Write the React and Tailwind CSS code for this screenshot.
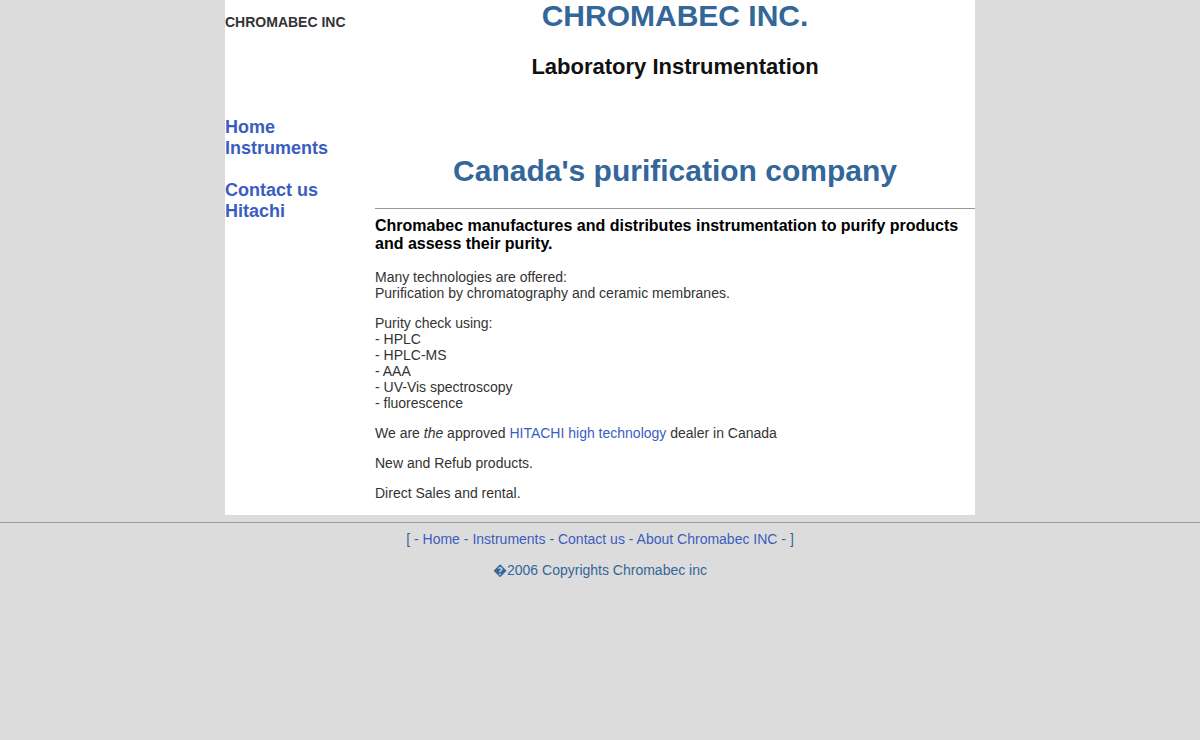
const navLinks = ["Home", "Instruments", null, "Contact us", "Hitachi"];
const purity = ["- HPLC", "- HPLC-MS", "- AAA", "- UV-Vis spectroscopy", "- fluorescence"];

export default function App() {
    return (
        <div className="min-h-[740px] bg-[#dcdcdc] font-['Liberation_Sans',Arial,sans-serif] text-[14px] leading-[16px] text-[#333]">
            <div className="mx-auto flex w-[750px] bg-white pb-[14px]">
                {/* left column */}
                <div className="w-[150px] shrink-0">
                    <div className="mt-[14px] text-[14px] font-bold leading-[16px] text-[#333]">CHROMABEC INC</div>
                    <div className="mt-[87px] text-[18px] font-bold leading-[21px]">
                        {navLinks.map((l, i) =>
                            l ? (
                                <div key={i}>
                                    <a href="#" className="text-[#3a5dc0]">
                                        {l}
                                    </a>
                                </div>
                            ) : (
                                <div key={i} className="h-[21px]" />
                            )
                        )}
                    </div>
                </div>

                {/* right column */}
                <div className="w-[600px]">
                    <h1 className="text-center text-[30px] font-bold leading-[32px] text-[#336699]">CHROMABEC INC.</h1>
                    <h2 className="mt-[22px] text-center text-[22px] font-bold leading-[25px] text-[#111]">
                        Laboratory Instrumentation
                    </h2>
                    <h2 className="mt-[75px] text-center text-[30px] font-bold leading-[34px] text-[#336699]">
                        Canada's purification company
                    </h2>
                    <hr className="mt-[20px] border-0 border-t border-[#999]" />
                    <p className="mt-[8px] text-[16px] font-bold leading-[18px] text-black">
                        Chromabec manufactures and distributes instrumentation to purify products and assess their purity.
                    </p>
                    <p className="mt-[16px]">
                        Many technologies are offered:
                        <br />
                        Purification by chromatography and ceramic membranes.
                    </p>
                    <p className="mt-[14px]">
                        Purity check using:
                        {purity.map((p) => (
                            <span key={p}>
                                <br />
                                {p}
                            </span>
                        ))}
                    </p>
                    <p className="mt-[14px]">
                        We are <i>the</i> approved{" "}
                        <a href="#" className="text-[#3a5dc0]">
                            HITACHI high technology
                        </a>{" "}
                        dealer in Canada
                    </p>
                    <p className="mt-[14px]">New and Refub products.</p>
                    <p className="mt-[14px]">Direct Sales and rental.</p>
                </div>
            </div>

            {/* footer */}
            <hr className="mt-[7px] border-0 border-t border-[#9a9a9a]" />
            <div className="mt-[8px] text-center text-[#336699]">
                [ -{" "}
                <a href="#" className="text-[#3a5dc0]">Home</a> -{" "}
                <a href="#" className="text-[#3a5dc0]">Instruments</a> -{" "}
                <a href="#" className="text-[#3a5dc0]">Contact us</a> -{" "}
                <a href="#" className="text-[#3a5dc0]">About Chromabec INC</a> - ]
            </div>
            <div className="mt-[15px] text-center text-[#336699]">{"\uFFFD"}2006 Copyrights Chromabec inc</div>
        </div>
    );
}
